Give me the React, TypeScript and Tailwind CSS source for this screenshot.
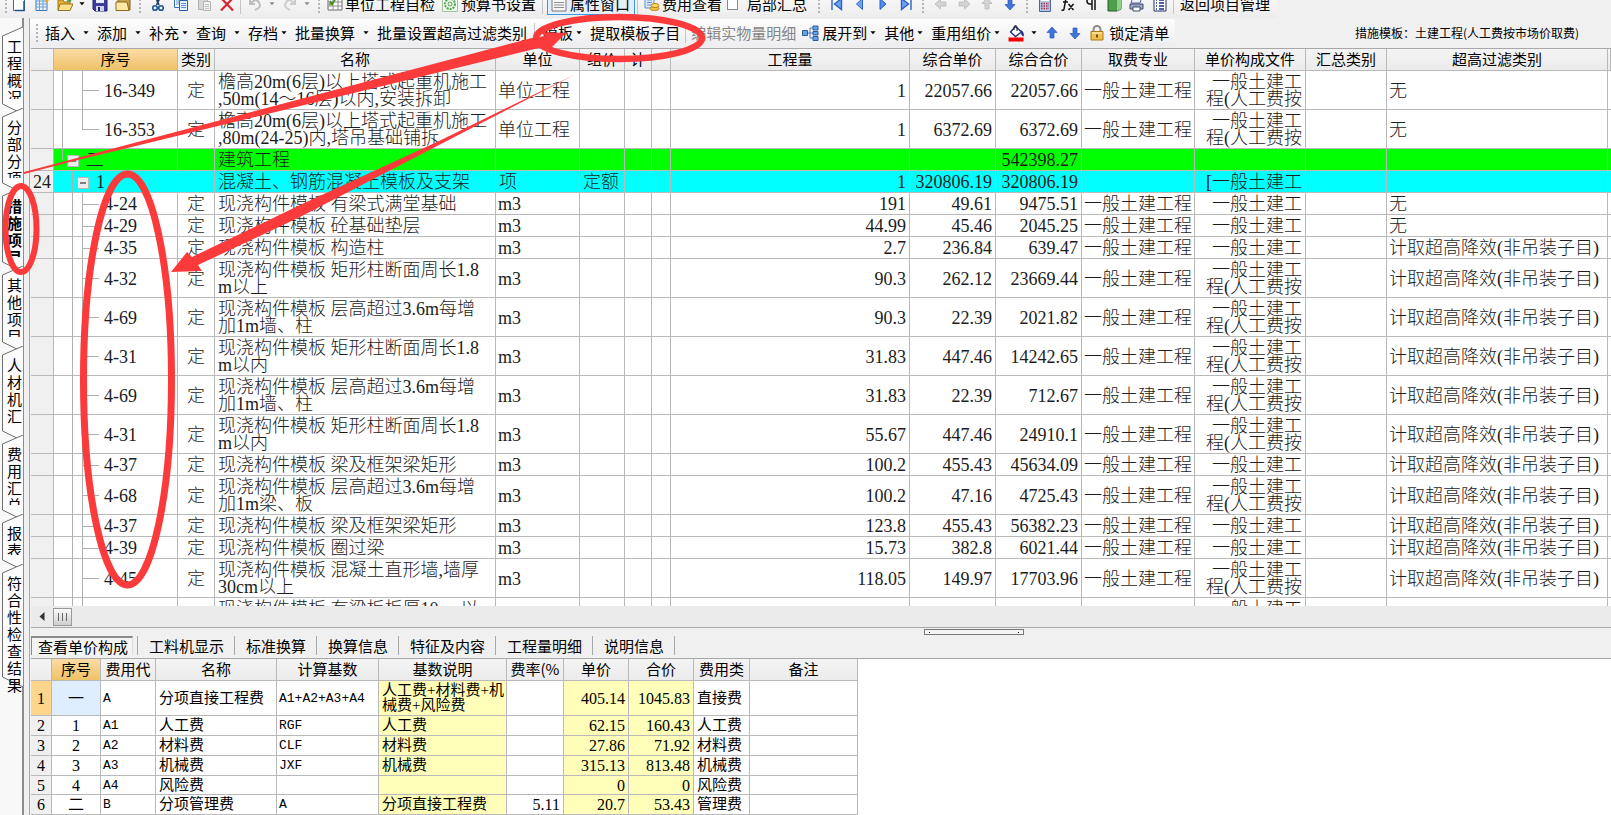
import React from "react";

const UI = "font-['Noto_Sans_CJK_SC',sans-serif]";
const CELL = "font-['Liberation_Serif','Noto_Sans_CJK_SC',serif]";

/* ---------- small toolbar pieces ---------- */

function Grip() {
  return (
    <span className="flex w-3 shrink-0 flex-col items-center gap-[2px]">
      {[0, 1, 2, 3, 4].map((i) => (
        <span key={i} className="h-[2px] w-[2px] bg-[#b4b4b8]" />
      ))}
    </span>
  );
}

function Sep() {
  return <span className="mx-[2px] h-5 w-px shrink-0 bg-[#c4c4c8]" />;
}

function Caret({ dim = false }: { dim?: boolean }) {
  return (
    <svg width="6" height="4" viewBox="0 0 7 4" className="shrink-0">
      <path d="M0.5 0h6L3.5 3.6z" fill={dim ? "#8a8a8a" : "#000"} />
    </svg>
  );
}

function IconButton({ label, children }: { label: string; children: React.ReactNode }) {
  return (
    <button type="button" aria-label={label} className="flex w-[23px] shrink-0 justify-center">
      <svg width="16" height="16" viewBox="0 0 16 16" aria-hidden="true">
        {children}
      </svg>
    </button>
  );
}

function Drop({ text, split = false }: { text: string; split?: boolean }) {
  return (
    <button type="button" className={split ? "flex shrink-0 items-center gap-2 pr-2" : "flex shrink-0 items-center gap-[3px] pr-2"}>
      {text}
      <Caret />
    </button>
  );
}

const ARROWS: Record<string, string> = {
  up: "M8 2l5 5.5h-3V13H6V7.500H3z",
  down: "M8 14l5-5.500h-3V3H6v5.500H3z",
  left: "M2 8l5.500-5v3H13v4H7.500v3z",
  right: "M14 8L8.500 3v3H3v4h5.500v3z",
};

function Arrow({ dir, label, dim = false }: { dir: string; label: string; dim?: boolean }) {
  return (
    <IconButton label={label}>
      <path d={ARROWS[dir]} fill={dim ? "#d4d4d4" : "#3f74dc"} stroke={dim ? "#b2b2b2" : "#2a56b4"} strokeWidth="0.7" />
    </IconButton>
  );
}

function TopToolbar() {
  return (
    <div className="flex h-[18px] shrink-0 items-end overflow-hidden bg-[#f0f0f0]">
      <div className="flex h-[28px] shrink-0 items-center bg-gradient-to-b from-[#fcfcfc] to-[#ececee] pr-2 text-[15px] leading-[18px] whitespace-nowrap">
        <span className="-mr-[5px] flex"><Grip /></span>
        <IconButton label="新建">
          <path d="M2.500 0.500h11v14h-11z" fill="#fff" stroke="#3c6694" />
          <path d="M13 5v9.500H4" fill="none" stroke="#29547f" strokeWidth="1.500" />
        </IconButton>
        <IconButton label="新建向导">
          <path d="M2 1.500h11v13H2z" fill="#eaf3fd" stroke="#3f79b8" />
          <path d="M2 5h11M2 8h11M2 11h11M5.500 2v12M9 2v12" stroke="#6fa2d6" />
          <path d="M13 0l1 3 2 1-3 1-1 3-1-4z" fill="#f5a623" />
        </IconButton>
        <IconButton label="打开">
          <path d="M1 4h5l1 2h6v8H1z" fill="#e6b43a" stroke="#9c7416" />
          <path d="M3 8h13l-3 6.500H1z" fill="#ffe08a" stroke="#9c7416" />
          <path d="M7 3q4-3 6 1.500M13.500 1v4H10" fill="none" stroke="#2f9b35" strokeWidth="1.400" />
        </IconButton>
        <span className="flex w-3 justify-center"><Caret /></span>
        <IconButton label="保存">
          <path d="M1 1h14v14H3l-2-2z" fill="#3c3c9c" stroke="#25256c" />
          <path d="M4 1h8v6H4z" fill="#e9ecfa" />
          <path d="M4 10h8v5H4z" fill="#cfd3ee" />
          <path d="M6 11h2v4H6z" fill="#25256c" />
        </IconButton>
        <IconButton label="关闭">
          <path d="M3 2h12v12H3z" fill="#caa04a" stroke="#7a5c1a" />
          <path d="M1 6h11l2 8.500H1z" fill="#ffe7a4" stroke="#8b6a1f" />
        </IconButton>
        <Grip />
        <IconButton label="剪切">
          <path d="M5 0l4 9M11 0L6.500 9" stroke="#1d3b66" strokeWidth="1.600" />
          <circle cx="5" cy="12" r="2.300" fill="none" stroke="#24569c" strokeWidth="1.600" />
          <circle cx="11" cy="12" r="2.300" fill="none" stroke="#24569c" strokeWidth="1.600" />
        </IconButton>
        <IconButton label="复制">
          <path d="M1.500 1.500h8v10h-8z" fill="#fff" stroke="#3a70b8" />
          <path d="M6.500 4.500h8v10h-8z" fill="#e8f2ff" stroke="#2a5ea8" />
          <path d="M8 7.500h5M8 9.500h5M8 11.500h5M3 4h3M3 6h3M3 8h3" stroke="#5a94d8" />
        </IconButton>
        <IconButton label="粘贴">
          <path d="M2.500 1.500h9v12h-9z" fill="#d6d6d6" stroke="#b0b0b0" />
          <path d="M7.500 5.500h7v9h-7z" fill="#f1f1f1" stroke="#b4b4b4" />
          <path d="M9 8.500h4M9 10.500h4M9 12.500h4" stroke="#c2c2c2" />
        </IconButton>
        <IconButton label="删除">
          <path d="M2 2l12 12.500M14 2L2 14.500" stroke="#dc2430" strokeWidth="2.200" />
        </IconButton>
        <Sep />
        <IconButton label="撤销">
          <path d="M3 3v5h5M3.500 7.500Q9 1.500 12 6.500T8 14" fill="none" stroke="#bdbdbd" strokeWidth="2" />
        </IconButton>
        <span className="flex w-3 justify-center"><Caret dim /></span>
        <IconButton label="恢复">
          <path d="M13 3v5H8M12.500 7.500Q7 1.500 4 6.500T8 14" fill="none" stroke="#cdcdcd" strokeWidth="2" />
        </IconButton>
        <span className="flex w-3 justify-center"><Caret dim /></span>
        <Grip />
        <button type="button" className="flex items-center">
          <svg width="16" height="16" viewBox="0 0 16 16" className="mx-[2px]">
            <path d="M1 2h14v12H1z" fill="#fff" stroke="#6a6a6a" />
            <path d="M1 6h14M1 10h14M6 2v12M11 2v12" stroke="#8c8c8c" />
            <path d="M2 6.500h4v3H2z" fill="#7cb342" />
            <path d="M3 5l2 3 5-7" fill="none" stroke="#3b8a1e" strokeWidth="1.600" />
          </svg>
          单位工程自检
        </button>
        <button type="button" className="ml-1 flex items-center">
          <svg width="16" height="16" viewBox="0 0 16 16" className="mx-[3px]">
            <path d="M0.500 0.500h15v15H.500z" fill="#eef8ee" stroke="#9cc79c" />
            <circle cx="8" cy="8" r="5" fill="none" stroke="#58a758" strokeWidth="2" strokeDasharray="2 1" />
            <circle cx="8" cy="8" r="2" fill="none" stroke="#58a758" />
          </svg>
          预算书设置
        </button>
        <span className="ml-1 flex"><Sep /></span>
        <button type="button" className="ml-[2px] flex h-[21px] items-center border border-[#3f96e4] bg-[#e3effb] pr-1">
          <svg width="16" height="16" viewBox="0 0 16 16" className="mx-[3px]">
            <path d="M1 1h14v14H1z" fill="#f6f6f6" stroke="#777" />
            <path d="M2 3h12" stroke="#8aa9cf" strokeWidth="2" />
            <path d="M3 6.500h10M3 9h10M3 11.500h10" stroke="#8f8f8f" />
          </svg>
          属性窗口
        </button>
        <Sep />
        <button type="button" className="ml-[2px] flex items-center">
          <svg width="16" height="16" viewBox="0 0 16 16" className="mx-[2px]">
            <path d="M1 1h9v11H1z" fill="#dcecff" stroke="#5a8fd0" />
            <path d="M3 4h5M3 6.500h5M3 9h4" stroke="#5a8fd0" />
            <ellipse cx="10.500" cy="12.500" rx="4.500" ry="2" fill="#f2c14a" stroke="#b98616" />
            <ellipse cx="11" cy="9.500" rx="4" ry="2" fill="#ffd76a" stroke="#b98616" />
          </svg>
          费用查看
        </button>
        <label className="ml-[5px] flex items-center gap-[9px]">
          <input type="checkbox" className="h-[11px] w-[11px] appearance-none border border-[#8a8a8a] bg-white" />
          局部汇总
        </label>
        <span className="ml-[6px] flex"><Grip /></span>
        <IconButton label="首条"><path d="M3 2v12M5.500 8l7-5.500v11z" fill="#6ea3f0" stroke="#2b62c4" strokeWidth="1.400" /></IconButton>
        <IconButton label="上一条"><path d="M4.500 8l6-5.500v11z" fill="#6ea3f0" stroke="#2b62c4" /></IconButton>
        <IconButton label="下一条"><path d="M11 8L5 2.500v11z" fill="#4f8cee" stroke="#2b62c4" /></IconButton>
        <IconButton label="末条"><path d="M13 2v12M10.500 8l-7-5.500v11z" fill="#6ea3f0" stroke="#2b62c4" strokeWidth="1.400" /></IconButton>
        <Grip />
        <Arrow dir="left" label="左移" dim />
        <Arrow dir="right" label="右移" dim />
        <Arrow dir="up" label="上移" dim />
        <Arrow dir="down" label="下移" />
        <Grip />
        <IconButton label="计算器">
          <path d="M2.500 0.500h11v15h-11z" fill="#b8c4e6" stroke="#50649c" />
          <path d="M4 2h8v3H4z" fill="#fff" />
          <path d="M4 7.500h8M4 10h8M4 12.500h8" stroke="#a03a4e" strokeWidth="1.400" strokeDasharray="1.500 1" />
        </IconButton>
        <IconButton label="公式"><path d="M9 2Q6 1 5.500 5L4 13Q3.500 15 1.500 14M3 6h5M8.500 8l5 6M13.500 8l-5 6" fill="none" stroke="#111" strokeWidth="1.500" /></IconButton>
        <IconButton label="段落"><path d="M13 2H7a3 3 0 000 6h2M9 2v12M12 2v12" fill="none" stroke="#111" strokeWidth="1.500" /></IconButton>
        <IconButton label="帮助"><path d="M2 3l9-2 4 2v10l-4 2H2z" fill="#4f9e4c" stroke="#255f27" /><path d="M11 4l4-1v10l-4 2z" fill="#8fd08a" /></IconButton>
        <IconButton label="打印"><path d="M4 1h9l-2 6H2z" fill="#eef3ff" stroke="#56618c" /><path d="M1 8h13v5H1z" fill="#9aa5c4" stroke="#414b70" /><path d="M4 11h7v4H4z" fill="#fff" stroke="#414b70" /></IconButton>
        <IconButton label="列表"><path d="M2 1h12v14H2z" fill="#fff" stroke="#222c66" /><path d="M4 4h1M7 4h5M4 7h1M7 7h5M4 10h1M7 10h5M4 13h1M7 13h5" stroke="#1b2a8c" strokeWidth="1.500" /></IconButton>
        <Sep />
        <button type="button" className="ml-1">返回项目管理</button>
      </div>
    </div>
  );
}

function SecondToolbar() {
  return (
    <div className="flex h-[30px] shrink-0 items-center bg-[#f0f0f0]">
      <div className="flex h-[28px] shrink-0 items-center rounded-r bg-gradient-to-b from-[#fdfdfd] to-[#ededef] pr-[6px] pl-px text-[15px] leading-[18px] whitespace-nowrap">
        <Grip />
        <span className="w-[2px]" />
        <Drop text="插入" split />
        <Drop text="添加" split />
        <Drop text="补充" />
        <Drop text="查询" split />
        <Drop text="存档" />
        <Drop text="批量换算" split />
        <button type="button">批量设置超高过滤类别</button>
        <span className="ml-[5px] flex"><Sep /></span>
        <span className="w-[6px]" />
        <Drop text="模板" />
        <button type="button">提取模板子目</button>
        <span className="ml-[3px] flex"><Sep /></span>
        <button type="button" disabled className="ml-[3px] text-[#858585]">编辑实物量明细</button>
        <button type="button" className="ml-[6px] flex items-center gap-[3px] pr-2">
          <svg width="17" height="16" viewBox="0 0 17 16">
            <path d="M5 8h3M8 3v10M8 3h3M8 13h3M8 8h3" stroke="#4a78b8" fill="none" />
            <path d="M.500 5.500h5v5h-5zM11 1h5v4h-5zM11 6.500h5v3.500h-5zM11 11.500h5v4h-5z" fill="#6aa0e4" stroke="#2c5e9e" />
          </svg>
          展开到
          <Caret />
        </button>
        <Drop text="其他" />
        <Drop text="重用组价" />
        <button type="button" aria-label="填充颜色" className="flex items-center gap-[6px] pr-[3px]">
          <svg width="17" height="17" viewBox="0 0 17 17">
            <path d="M7.500 1.500l6 5.500-6 4.500L2.500 7z" fill="#fff" stroke="#1f2f7c" strokeWidth="1.400" />
            <path d="M6 5V1.500q2-2 3 0V6" fill="none" stroke="#222" />
            <path d="M13 5q4 3 2.500 6.500-3-1-2.500-6.500" fill="#1f2f7c" />
            <path d="M0.500 12.500h15v4H.500z" fill="#f00000" />
          </svg>
          <Caret />
        </button>
        <Arrow dir="up" label="上移一行" />
        <Arrow dir="down" label="下移一行" />
        <button type="button" className="ml-1 flex items-center gap-[5px]">
          <svg width="14" height="16" viewBox="0 0 14 16">
            <path d="M3.500 7V4.500a3.500 3.500 0 017 0V7" fill="none" stroke="#8b8b8b" strokeWidth="2" />
            <path d="M1 6.500h12V15H1z" fill="#f0c04c" stroke="#a87a1c" />
            <path d="M2 8h10" stroke="#ffe6a0" strokeWidth="1.500" />
            <path d="M7 9.500v3" stroke="#6b4a0c" strokeWidth="2" />
          </svg>
          锁定清单
        </button>
      </div>
      <span className="mr-[32px] ml-auto text-[12px] whitespace-nowrap">措施模板：土建工程(人工费按市场价取费)</span>
    </div>
  );
}

/* ---------- left tab strip ---------- */

const SIDE = [
  { t: "工程概况", h: 81 },
  { t: "分部分项", h: 79 },
  { t: "措施项目", h: 79, on: true },
  { t: "其他项目", h: 80 },
  { t: "人材机汇总", h: 89 },
  { t: "费用汇总", h: 79 },
  { t: "报表", h: 50 },
  { t: "符合性检查结果", h: 117, full: true },
];

const TAB_H: Record<number, string> = {
  81: "h-[81px]",
  79: "h-[79px]",
  80: "h-[80px]",
  89: "h-[89px]",
  50: "h-[50px]",
  117: "h-[117px]",
};

function SideTabs() {
  return (
    <nav className="flex w-6 shrink-0 flex-col border-r-2 border-[#8c8c8c] bg-[#f8f8f8] pt-[9px]">
      {SIDE.map((s) => (
        <button key={s.t} type="button" className={`relative flex ${TAB_H[s.h]} shrink-0 flex-col pt-[10px] pb-[9px] pl-[7px] text-left`}>
          <svg className="absolute top-0 left-0" width="24" height={s.h + 8} viewBox={`0 0 24 ${s.h + 8}`}>
            <path d={`M23 0L2.500 9V${s.h - 4}L23 ${s.h + 6}`} fill="#fcfcfc" stroke="#6e6e6e" />
          </svg>
          <span className={`relative w-4 min-h-0 text-[15px] leading-[17px] break-all ${s.full ? "" : "flex-1 overflow-hidden"} ${s.on ? "font-bold" : ""}`}>
            {s.t}
          </span>
        </button>
      ))}
    </nav>
  );
}

/* ---------- main grid ---------- */

const GC = "border-r border-b border-[#b9b9b9]";
const BC = `${GC} pt-[2px]`;

type Row = {
  code: string;
  name: string[];
  unit: string;
  qty: string;
  price: string;
  total: string;
  over: string;
  two: boolean;
};

const F = "计取超高降效(非吊装子目)";
const N = "现浇构件模板 ";
const r = (code: string, name: string[], qty: string, price: string, total: string, over = F, unit = "m3"): Row => ({
  code, name, qty, price, total, over, unit, two: name.length > 1,
});

const HEAD_ROWS: Row[] = [
  r("16-349", ["檐高20m(6层)以上塔式起重机施工", ",50m(14～16层)以内,安装拆卸"], "1", "22057.66", "22057.66", "无", "单位工程"),
  r("16-353", ["檐高20m(6层)以上塔式起重机施工", ",80m(24-25)内,塔吊基础铺拆"], "1", "6372.69", "6372.69", "无", "单位工程"),
];

const ROWS: Row[] = [
  r("4-24", [N + "有梁式满堂基础"], "191", "49.61", "9475.51", "无"),
  r("4-29", [N + "砼基础垫层"], "44.99", "45.46", "2045.25", "无"),
  r("4-35", [N + "构造柱"], "2.7", "236.84", "639.47"),
  r("4-32", [N + "矩形柱断面周长1.8", "m以上"], "90.3", "262.12", "23669.44"),
  r("4-69", [N + "层高超过3.6m每增", "加1m墙、柱"], "90.3", "22.39", "2021.82"),
  r("4-31", [N + "矩形柱断面周长1.8", "m以内"], "31.83", "447.46", "14242.65"),
  r("4-69", [N + "层高超过3.6m每增", "加1m墙、柱"], "31.83", "22.39", "712.67"),
  r("4-31", [N + "矩形柱断面周长1.8", "m以内"], "55.67", "447.46", "24910.1"),
  r("4-37", [N + "梁及框架梁矩形"], "100.2", "455.43", "45634.09"),
  r("4-68", [N + "层高超过3.6m每增", "加1m梁、板"], "100.2", "47.16", "4725.43"),
  r("4-37", [N + "梁及框架梁矩形"], "123.8", "455.43", "56382.23"),
  r("4-39", [N + "圈过梁"], "15.73", "382.8", "6021.44"),
  r("4-45", [N + "混凝土直形墙,墙厚", "30cm以上"], "118.05", "149.97", "17703.96"),
  r("4-50", [N + "有梁板板厚10cm以", "内"], "", "", ""),
];

function GridRow({ row, head, last }: { row: Row; head: boolean; last?: boolean }) {
  return (
    <tr className={row.two ? "h-[39px]" : "h-[22px]"}>
      <td className={`${GC} bg-[#f0f0f0]`} />
      <td className={`${BC} relative pl-[50px]`}>
        {head ? (
          <>
            <span className="absolute top-0 -bottom-px left-2 w-px bg-[#b0b0b0]" />
            <span className={`absolute top-0 left-7 w-px bg-[#b0b0b0] ${last ? "h-1/2" : "-bottom-px"}`} />
          </>
        ) : (
          <>
            <span className="absolute top-0 -bottom-px left-[18px] w-px bg-[#b0b0b0]" />
            <span className="absolute top-0 -bottom-px left-7 w-px bg-[#b0b0b0]" />
          </>
        )}
        <span className="absolute top-1/2 left-7 h-px w-[17px] bg-[#b0b0b0]" />
        {row.code}
      </td>
      <td className={`${BC} text-center`}>定</td>
      <td className={`${BC} pl-[3px]`}>
        {row.name.map((l) => (
          <div key={l}>{l}</div>
        ))}
      </td>
      <td className={`${BC} pl-[2px]`}>{row.unit}</td>
      <td className={GC} />
      <td className={GC} />
      <td className={GC} />
      <td className={`${BC} pr-[3px] text-right`}>{row.qty}</td>
      <td className={`${BC} pr-[3px] text-right`}>{row.price}</td>
      <td className={`${BC} pr-[3px] text-right`}>{row.total}</td>
      <td className={`${BC} text-center`}>{row.qty ? "一般土建工程" : ""}</td>
      <td className={`${BC} pr-[3px] text-right`}>
        <div>一般土建工</div>
        {row.two && <div>程(人工费按</div>}
      </td>
      <td className={GC} />
      <td className={`${BC} pl-[2px]`}>{row.qty ? row.over : ""}</td>
      <td className="border-b border-[#b9b9b9]" />
    </tr>
  );
}

function Minus() {
  return (
    <svg width="12" height="12" viewBox="0 0 12 12" className="block">
      <path d="M.500.500h11v11H.500z" fill="#ececec" stroke="#b8b8b8" />
      <path d="M3 6h6" stroke="#111" />
    </svg>
  );
}

function Group({ no, sym, indent, bg, cells }: { no: string; sym: string; indent: boolean; bg: string; cells: string[] }) {
  const right = [6, 7, 8, 10];
  return (
    <tr className={`h-[22px] ${bg}`}>
      <td className={`${BC} bg-[#f0f0f0] text-center`}>{no}</td>
      <td className={`${BC} relative`}>
        <span className={indent ? "absolute top-0 -bottom-px left-[18px] w-px bg-[#b0b0b0]" : "absolute top-0 left-2 h-1/2 w-px bg-[#b0b0b0]"} />
        <div className={indent ? "flex items-center gap-[7px] pl-[23px]" : "flex items-center gap-[7px] pl-[13px]"}>
          <button type="button" aria-label="折叠"><Minus /></button>
          {sym}
        </div>
      </td>
      <td className={GC} />
      {cells.map((c, i) => (
        <td key={i} className={`${BC} ${right.includes(i + 1) ? "pr-[3px] text-right" : "pl-[3px]"}`}>{c}</td>
      ))}
      <td className="border-b border-[#b9b9b9]" />
    </tr>
  );
}

const COLS = [
  ["", "w-[23px]"],
  ["序号", "w-[124px]"],
  ["类别", "w-[37px]"],
  ["名称", "w-[281px]"],
  ["单位", "w-[84px]"],
  ["组价", "w-[45px]"],
  ["计", "w-[27px]"],
  ["", "w-[19px]"],
  ["工程量", ""],
  ["综合单价", "w-[86px]"],
  ["综合合价", "w-[86px]"],
  ["取费专业", "w-[113px]"],
  ["单价构成文件", "w-[111px]"],
  ["汇总类别", "w-[81px]"],
  ["超高过滤类别", "w-[221px]"],
  ["", "w-[3px]"],
];

function MainGrid() {
  return (
    <div className="min-h-0 flex-1 overflow-hidden border-t border-[#a8a8a8] bg-white">
      <table className={`w-full table-fixed border-separate border-spacing-0 text-[18px] leading-[17px] font-light whitespace-nowrap text-[#1c1c1c] ${CELL}`}>
        <thead>
          <tr className="h-[22px] bg-gradient-to-b from-[#f4f4f4] to-[#ebebeb] text-black">
            {COLS.map(([t, w], i) => (
              <th key={i} className={`${GC} ${w} overflow-hidden p-0 pb-[2px] text-[15px] font-normal ${UI} ${i === 1 ? "bg-gradient-to-b from-[#fadca5] to-[#f0c166]" : ""}`}>
                {t}
              </th>
            ))}
          </tr>
        </thead>
        <tbody>
          {HEAD_ROWS.map((row, i) => (
            <GridRow key={i} row={row} head last={i === 1} />
          ))}
          <Group no="" sym="二" indent={false} bg="bg-[#00ff00]" cells={["建筑工程", "", "", "", "", "", "", "542398.27", "", "", "", ""]} />
          <Group no="24" sym="1" indent bg="bg-[#00ffff]" cells={["混凝土、钢筋混凝土模板及支架", "项", "定额", "", "", "1", "320806.19", "320806.19", "", "[一般土建工", "", ""]} />
          {ROWS.map((row, i) => (
            <GridRow key={i} row={row} head={false} />
          ))}
        </tbody>
      </table>
    </div>
  );
}

/* ---------- lower detail pane ---------- */

const DCOLS = [
  ["", "w-[21px]"],
  ["序号", "w-[49px]"],
  ["费用代", "w-[55px]"],
  ["名称", "w-[121px]"],
  ["计算基数", "w-[102px]"],
  ["基数说明", "w-[128px]"],
  ["费率(%", "w-[57px]"],
  ["单价", "w-[65px]"],
  ["合价", "w-[65px]"],
  ["费用类", "w-[56px]"],
  ["备注", "w-[108px]"],
];

const DROWS = [
  ["1", "一", "A", "分项直接工程费", "A1+A2+A3+A4", "人工费+材料费+机|械费+风险费", "", "405.14", "1045.83", "直接费", ""],
  ["2", "1", "A1", "人工费", "RGF", "人工费", "", "62.15", "160.43", "人工费", ""],
  ["3", "2", "A2", "材料费", "CLF", "材料费", "", "27.86", "71.92", "材料费", ""],
  ["4", "3", "A3", "机械费", "JXF", "机械费", "", "315.13", "813.48", "机械费", ""],
  ["5", "4", "A4", "风险费", "", "", "", "0", "0", "风险费", ""],
  ["6", "二", "B", "分项管理费", "A", "分项直接工程费", "5.11", "20.7", "53.43", "管理费", ""],
];

const DCELL = [
  "text-center text-[16px]",
  "text-center text-[16px]",
  "pl-[2px] font-['Liberation_Mono',monospace] text-[13px]",
  "pl-[3px]",
  "pl-[2px] font-['Liberation_Mono',monospace] text-[13px]",
  "pl-[3px] bg-[#ffffb9]",
  "pr-[3px] text-right text-[16px]",
  "pr-[3px] text-right text-[16px] bg-[#ffffb9]",
  "pr-[3px] text-right text-[16px] bg-[#ffffb9]",
  "pl-[3px]",
  "",
];

function DetailTabs() {
  return (
    <div className="relative flex h-[32px] shrink-0 items-end border-t border-b border-[#a8a8a8] bg-[#f0f0f0] pb-[3px] text-[15px] leading-[19px] whitespace-nowrap">
      <button type="button" className="h-[19px] border-t-2 border-r border-l border-t-[#8a8a8a] border-r-[#dcdcdc] border-l-[#8a8a8a] bg-[#f5f5f5] pr-1 pl-[6px] leading-[18px]">
        查看单价构成
      </button>
      <span className="ml-1 h-[19px] w-px bg-[#a8a8a8]" />
      {["工料机显示", "标准换算", "换算信息", "特征及内容", "工程量明细", "说明信息"].map((t) => (
        <button key={t} type="button" className="border-r border-[#a8a8a8] pr-[10px] pl-[11px]">{t}</button>
      ))}
      <span className="absolute top-px left-[56.5%] flex h-[6px] w-[100px] items-center justify-between border border-[#777] bg-[#f4f4f4] px-1">
        <span className="h-px w-px bg-black" />
        <span className="h-px w-px bg-black" />
      </span>
    </div>
  );
}

function DetailTable() {
  return (
    <div className="shrink-0 bg-white">
      <table className={`w-[827px] table-fixed border-separate border-spacing-0 text-[15px] leading-[15px] whitespace-nowrap text-black ${CELL}`}>
        <thead>
          <tr className="h-[22px] bg-gradient-to-b from-[#f4f4f4] to-[#ebebeb]">
            {DCOLS.map(([t, w], i) => (
              <th key={i} className={`${GC} ${w} p-0 pb-[2px] font-normal ${UI} ${i === 1 ? "bg-gradient-to-b from-[#fadca5] to-[#f0c166]" : ""}`}>{t}</th>
            ))}
          </tr>
        </thead>
        <tbody>
          {DROWS.map((row, ri) => (
            <tr key={ri} className={ri === 0 ? "h-[35px]" : ri === 4 ? "h-[19px]" : "h-5"}>
              {row.map((c, i) => (
                <td
                  key={i}
                  className={`${GC} ${DCELL[i]} ${i === 0 ? (ri === 0 ? "bg-[#ffd58c]" : "bg-[#f0f0f0]") : ""} ${ri === 0 && i === 1 ? "bg-[#dfeefe]" : ""}`}
                >
                  {c.split("|").map((l, k) => (
                    <div key={k}>{l}</div>
                  ))}
                </td>
              ))}
            </tr>
          ))}
        </tbody>
      </table>
    </div>
  );
}

/* ---------- red pen marks over the window ---------- */

function Marks() {
  return (
    <svg className="pointer-events-none absolute top-0 left-0" width="720" height="600" viewBox="0 0 720 600" aria-hidden="true">
      <g fill="none" stroke="#fb3b3b">
        <ellipse cx="619" cy="38" rx="83" ry="21" strokeWidth="6.500" />
        <ellipse cx="21" cy="229" rx="15.500" ry="43" strokeWidth="6" />
        <ellipse cx="127.500" cy="379.500" rx="44" ry="205.500" strokeWidth="7" />
      </g>
      <g fill="#fb3b3b">
        <path d="M24 172L532 38L545 36L540 32L566 33L550 49L543 47L520 52.500L72 161.500L24 174z" />
        <path d="M576 74L440 140.500L300 205L192 257L187 252L171 272L202 271L198 265L300 217L440 144.500z" />
      </g>
    </svg>
  );
}

export default function App() {
  return (
    <div className={`relative flex h-screen flex-col overflow-hidden bg-[#f0f0f0] text-black ${UI}`}>
      <TopToolbar />
      <div className="flex min-h-0 flex-1">
        <SideTabs />
        <main className="ml-[5px] flex min-w-0 flex-1 flex-col border-l border-[#a8a8a8]">
          <SecondToolbar />
          <div className="flex min-h-0 flex-1 flex-col pl-px">
            <MainGrid />
            <div className="flex h-[21px] shrink-0 items-center bg-[#ebebeb]">
              <button type="button" aria-label="向左滚动" className="flex w-[22px] justify-center">
                <svg width="6" height="9" viewBox="0 0 6 9"><path d="M5.500 0v9L.500 4.500z" fill="#333" /></svg>
              </button>
              <button type="button" aria-label="滚动条" className="flex h-[18px] w-[19px] items-center justify-center gap-[3px] border border-[#9a9a9a] bg-gradient-to-b from-[#fafafa] to-[#cfcfcf]">
                <span className="h-2 w-px bg-[#666]" />
                <span className="h-2 w-px bg-[#666]" />
                <span className="h-2 w-px bg-[#666]" />
              </button>
            </div>
            <DetailTabs />
            <DetailTable />
          </div>
        </main>
      </div>
      <Marks />
    </div>
  );
}
